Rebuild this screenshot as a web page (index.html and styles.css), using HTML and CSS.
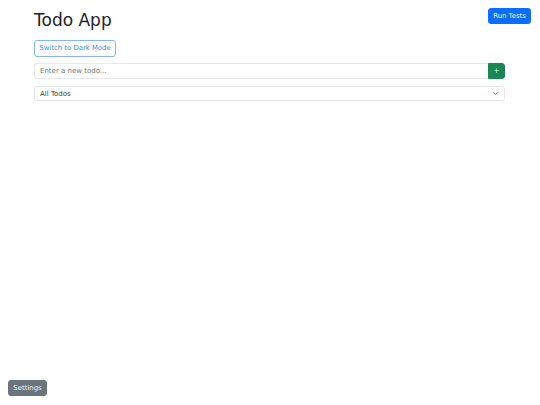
FILE: index.html
```html
<!DOCTYPE html>
<html lang="en">
<head>
<meta charset="utf-8">
<title>Todo App</title>
<link rel="stylesheet" href="styles.css">
</head>
<body>
<button class="btn btn-primary run-tests">Run Tests</button>
<main class="container">
  <h1 class="title">Todo App</h1>
  <button class="btn btn-outline-primary theme-toggle">Switch to Dark Mode</button>
  <div class="input-group">
    <input class="form-control" type="text" placeholder="Enter a new todo...">
    <button class="btn btn-success add-btn">+</button>
  </div>
  <div class="select-wrap">
    <select class="form-select">
      <option>All Todos</option>
      <option>Active</option>
      <option>Completed</option>
    </select>
    <svg class="chevron" viewBox="0 0 16 16" width="5" height="5"><path d="M2 5l6 6 6-6" fill="none" stroke="#5c636a" stroke-width="2" stroke-linecap="round" stroke-linejoin="round"/></svg>
  </div>
</main>
<button class="btn btn-secondary settings">Settings</button>
</body>
</html>
```

FILE: styles.css
```css
* { box-sizing: border-box; }
html, body { margin: 0; padding: 0; background: #fff; }
body {
  font-family: "DejaVu Sans", sans-serif;
  color: #212529;
  width: 540px;
  height: 405px;
  position: relative;
  overflow: hidden;
}
.btn {
  font-family: "DejaVu Sans", sans-serif;
  font-size: 6.9px;
  line-height: 1;
  border-radius: 3px;
  border: 1px solid transparent;
  cursor: pointer;
  padding: 0;
}
.btn-primary { background: #0d6efd; border-color: #0d6efd; color: #f4f8ff; }
.btn-secondary { background: #6c757d; border-color: #6c757d; color: #f1f2f3; }
.btn-success { background: #198754; border-color: #198754; color: #e8f4ee; }
.btn-outline-primary { background: #fff; border-color: #86b5fb; color: #3b8af5; }

.run-tests {
  position: absolute;
  top: 8px;
  right: 9px;
  width: 43px;
  height: 16px;
}
.settings {
  position: absolute;
  left: 8px;
  bottom: 9px;
  width: 39px;
  height: 16px;
}
.container {
  width: 471px;
  margin-left: 34px;
  padding-top: 9px;
  display: flex;
  flex-direction: column;
  align-items: flex-start;
}
.title {
  margin: 0;
  font-weight: 400;
  font-size: 17px;
  line-height: 22px;
  margin-bottom: 9px;
  color: #1e2125;
}
.theme-toggle {
  width: 82px;
  height: 17px;
  margin-bottom: 6px;
}
.input-group {
  display: flex;
  width: 100%;
  height: 16px;
  margin-bottom: 7px;
}
.form-control {
  flex: 1;
  min-width: 0;
  height: 100%;
  border: 1px solid #e6e8eb;
  border-right: none;
  border-radius: 3px 0 0 3px;
  padding: 0 5px;
  font-family: "DejaVu Sans", sans-serif;
  font-size: 7px;
  color: #212529;
  outline: none;
}
.form-control::placeholder { color: #73797f; opacity: 1; }
.add-btn {
  width: 17px;
  height: 100%;
  border-radius: 0 3px 3px 0;
  font-size: 7px;
}
.select-wrap {
  position: relative;
  width: 100%;
  height: 15px;
}
.form-select {
  display: block;
  appearance: none;
  -webkit-appearance: none;
  width: 100%;
  height: 100%;
  border: 1px solid #e6e8eb;
  border-radius: 3px;
  background: #fff;
  padding: 0 5px;
  font-family: "DejaVu Sans", sans-serif;
  font-size: 7px;
  color: #3a3f44;
  outline: none;
}
.chevron {
  position: absolute;
  right: 7px;
  top: 5px;
  pointer-events: none;
}
```
